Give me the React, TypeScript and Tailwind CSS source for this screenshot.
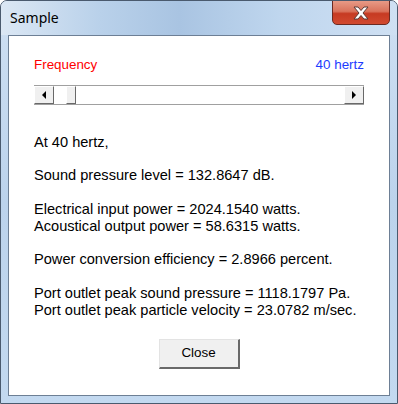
export default function App() {
    return (
        <div className="w-[398px] h-[404px] flex flex-col rounded-t-[7px] border border-[#4a5a6e] bg-gradient-to-b from-[#cfe0f3] via-[#bcd3ec] to-[#c3d9f0] overflow-hidden">
            {/* title bar */}
            <div className="h-[34px] flex items-start justify-between bg-[linear-gradient(90deg,#dbe7f4_0%,#b9d1ea_25%,#a9c4e2_45%,#bfd6ee_70%,#cfe0f3_100%)]">
                <span className="pl-[9px] pt-[6px] text-[14px] text-black" style={{ fontFamily: '"Noto Sans", "Open Sans", sans-serif' }}>
                    Sample
                </span>
                <div className="mr-[7px] -mt-px w-[58px] h-[25px] rounded-b-[5px] border border-[#6b2a22] bg-[linear-gradient(180deg,#e79a86_0%,#d9735c_45%,#c63a22_55%,#d14a30_100%)] flex items-center justify-center">
                    <svg width="18" height="14" viewBox="0 0 18 14">
                        <path d="M2 1 L6 1 L9 4.5 L12 1 L16 1 L11 7 L16 13 L12 13 L9 9.5 L6 13 L2 13 L7 7 Z" fill="#ffffff" stroke="#5a3a36" strokeWidth="1" />
                    </svg>
                </div>
            </div>

            {/* client area */}
            <div className="mx-[7px] mb-[7px] flex-1 border border-[#6d7f95] bg-white px-[25px] pt-[21px]" style={{ fontFamily: '"Liberation Sans", Arial, sans-serif' }}>
                <div className="flex justify-between text-[13.4px] leading-[15px]">
                    <span className="text-[#ff0000]">Frequency</span>
                    <span className="text-[#1e3cff]">40 hertz</span>
                </div>

                {/* scroll bar */}
                <div className="mt-[13px] h-[20px] flex border-t border-t-[#a0a0a0] border-b border-b-[#a0a0a0] bg-[#f4f4f4]">
                    <div className="w-[20px] h-full flex items-center justify-center bg-[#f0f0f0] border-t border-l border-white border-r border-b border-r-[#696969] border-b-[#696969]">
                        <div className="w-0 h-0 border-y-[4px] border-y-transparent border-r-[4px] border-r-black" />
                    </div>
                    <div className="w-[12px] bg-white" />
                    <div className="w-[10px] h-full bg-[#f0f0f0] border-t border-l border-white border-r border-b border-r-[#696969] border-b-[#696969]" />
                    <div className="flex-1 bg-white" />
                    <div className="w-[20px] h-full flex items-center justify-center bg-[#f0f0f0] border-t border-l border-white border-r border-b border-r-[#696969] border-b-[#696969]">
                        <div className="w-0 h-0 border-y-[4px] border-y-transparent border-l-[4px] border-l-black" />
                    </div>
                </div>

                {/* results */}
                <div className="mt-[29px] text-[14.6px] leading-[17px] text-black">
                    <p>At 40 hertz,</p>
                    <p className="mt-[16px]">Sound pressure level = 132.8647 dB.</p>
                    <p className="mt-[17px]">Electrical input power = 2024.1540 watts.</p>
                    <p>Acoustical output power = 58.6315 watts.</p>
                    <p className="mt-[16px]">Power conversion efficiency = 2.8966 percent.</p>
                    <p className="mt-[17px]">Port outlet peak sound pressure = 1118.1797 Pa.</p>
                    <p>Port outlet peak particle velocity = 23.0782 m/sec.</p>
                </div>

                <div className="mt-[20px] flex justify-center">
                    <button className="w-[81px] h-[30px] bg-[#f0f0f0] text-[13.4px] text-black border-t border-l border-[#e3e3e3] border-r-2 border-b-2 border-r-[#696969] border-b-[#696969]">
                        Close
                    </button>
                </div>
            </div>
        </div>
    )
}
